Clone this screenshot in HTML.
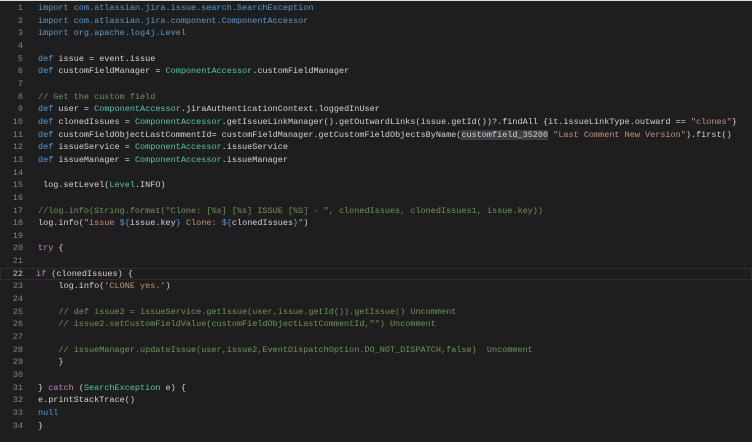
<!DOCTYPE html>
<html><head><meta charset="utf-8"><style>
html,body{margin:0;padding:0;background:#1e1e1e;width:752px;height:442px;overflow:hidden}
.wrap{position:absolute;top:2px;left:0;right:0;font-family:"Liberation Mono",monospace;font-size:8.5px;line-height:12.67px;color:#d4d4d4}
.l{height:12.67px;position:relative}
.n{position:absolute;left:0;width:23px;text-align:right;color:#858585}
.c{position:absolute;left:38px;white-space:pre}
.k{color:#569cd6}.t{color:#4ec9b0}.g{color:#6a9955}.s{color:#ce9178}.p{color:#c586c0}
.hl{box-shadow:inset 0 0 0 1px #2e2e2e}
.n.a{color:#c6c6c6}
</style></head><body>
<div style="position:absolute;top:0;left:0;width:752px;height:1px;background:#ddd"></div>
<div class="wrap">
<div class="l"><span class="n">1</span><span class="c"><span class="k">import com.atlassian.jira.issue.search.SearchException</span></span></div>
<div class="l"><span class="n">2</span><span class="c"><span class="k">import com.atlassian.jira.component.ComponentAccessor</span></span></div>
<div class="l"><span class="n">3</span><span class="c"><span class="k">import org.apache.log4j.Level</span></span></div>
<div class="l"><span class="n">4</span></div>
<div class="l"><span class="n">5</span><span class="c"><span class="k">def</span> issue = event.issue</span></div>
<div class="l"><span class="n">6</span><span class="c"><span class="k">def</span> customFieldManager = <span class="t">ComponentAccessor</span>.customFieldManager</span></div>
<div class="l"><span class="n">7</span></div>
<div class="l"><span class="n">8</span><span class="c"><span class="g">// Get the custom field</span></span></div>
<div class="l"><span class="n">9</span><span class="c"><span class="k">def</span> user = <span class="t">ComponentAccessor</span>.jiraAuthenticationContext.loggedInUser</span></div>
<div class="l"><span class="n">10</span><span class="c"><span class="k">def</span> clonedIssues = <span class="t">ComponentAccessor</span>.getIssueLinkManager().getOutwardLinks(issue.getId())?.findAll {it.issueLinkType.outward == <span class="s">"clones"</span>}</span></div>
<div class="l"><span class="n">11</span><span class="c"><span class="k">def</span> customFieldObjectLastCommentId= customFieldManager.getCustomFieldObjectsByName(<span style="background:#3a3d41">customfield_35200</span> <span class="s">"Last Comment New Version"</span>).first()</span></div>
<div class="l"><span class="n">12</span><span class="c"><span class="k">def</span> issueService = <span class="t">ComponentAccessor</span>.issueService</span></div>
<div class="l"><span class="n">13</span><span class="c"><span class="k">def</span> issueManager = <span class="t">ComponentAccessor</span>.issueManager</span></div>
<div class="l"><span class="n">14</span></div>
<div class="l"><span class="n">15</span><span class="c"> log.setLevel(<span class="t">Level</span>.INFO)</span></div>
<div class="l"><span class="n">16</span></div>
<div class="l"><span class="n">17</span><span class="c"><span class="g">//log.info(String.format("Clone: [%s] [%s] ISSUE [%S] - ", clonedIssues, clonedIssues1, issue.key))</span></span></div>
<div class="l"><span class="n">18</span><span class="c">log.info(<span class="s">"issue </span><span class="k">${</span>issue.key<span class="k">}</span><span class="s"> Clone: </span><span class="k">${</span>clonedIssues<span class="k">}</span><span class="s">"</span>)</span></div>
<div class="l"><span class="n">19</span></div>
<div class="l"><span class="n">20</span><span class="c"><span class="p">try</span> {</span></div>
<div class="l"><span class="n">21</span></div>
<div class="l hl"><span class="n a">22</span><span class="c" style="left:36px"><span class="p">if</span> (clonedIssues) {</span></div>
<div class="l"><span class="n">23</span><span class="c">    log.info(<span class="s">'CLONE yes.'</span>)</span></div>
<div class="l"><span class="n">24</span></div>
<div class="l"><span class="n">25</span><span class="c"><span class="g">    // def issue2 = issueService.getIssue(user,issue.getId()).getIssue() Uncomment</span></span></div>
<div class="l"><span class="n">26</span><span class="c"><span class="g">    // issue2.setCustomFieldValue(customFieldObjectLastCommentId,"") Uncomment</span></span></div>
<div class="l"><span class="n">27</span></div>
<div class="l"><span class="n">28</span><span class="c"><span class="g">    // issueManager.updateIssue(user,issue2,EventDispatchOption.DO_NOT_DISPATCH,false)  Uncomment</span></span></div>
<div class="l"><span class="n">29</span><span class="c">    }</span></div>
<div class="l"><span class="n">30</span></div>
<div class="l"><span class="n">31</span><span class="c">} <span class="p">catch</span> (<span class="t">SearchException</span> e) {</span></div>
<div class="l"><span class="n">32</span><span class="c">e.printStackTrace()</span></div>
<div class="l"><span class="n">33</span><span class="c"><span class="k">null</span></span></div>
<div class="l"><span class="n">34</span><span class="c">}</span></div>
</div>
</body></html>
